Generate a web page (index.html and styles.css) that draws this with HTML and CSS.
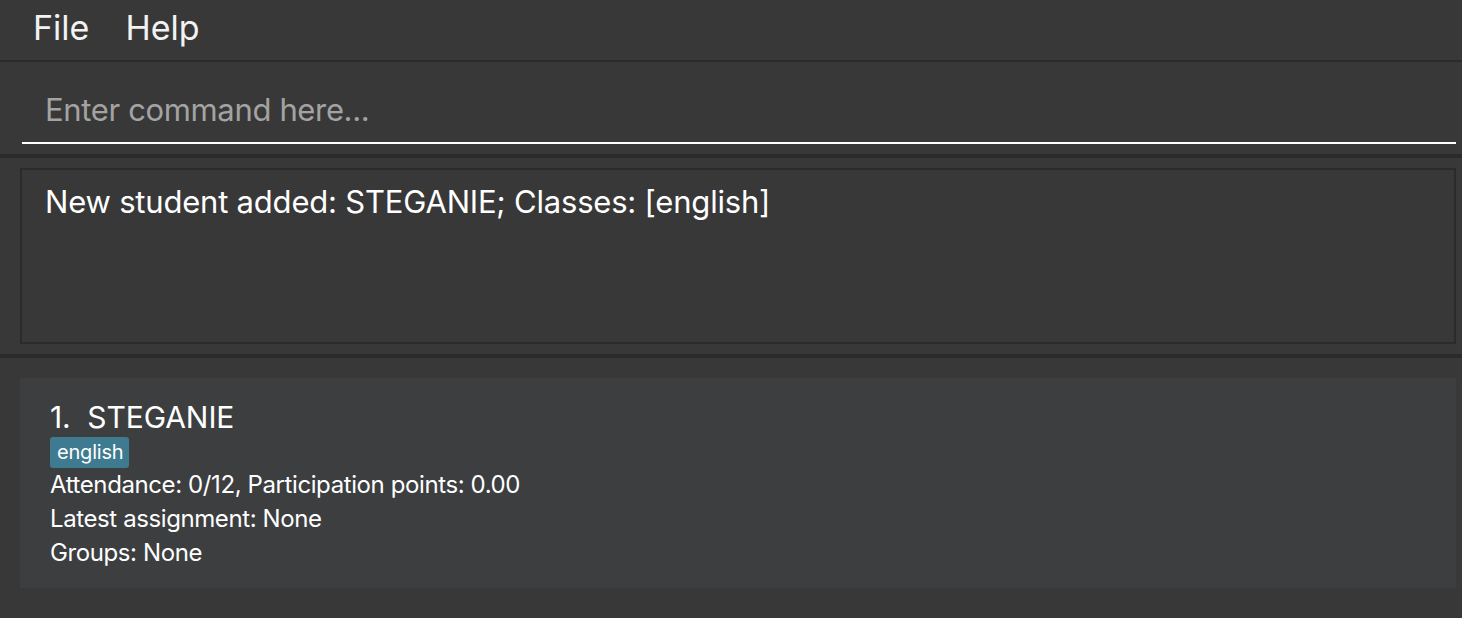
FILE: index.html
```html
<!DOCTYPE html>
<html>
<head>
<meta charset="utf-8">
<link rel="stylesheet" href="styles.css">
</head>
<body>
<div class="app">
  <div class="menubar">
    <span class="menu-item">File</span>
    <span class="menu-item">Help</span>
  </div>
  <div class="command-pane">
    <div class="command-field">
      <span class="placeholder">Enter command here...</span>
    </div>
  </div>
  <div class="result-pane">
    <div class="result-box">New student added: STEGANIE; Classes: [english]</div>
  </div>
  <div class="list-pane">
    <div class="card">
      <div class="name">1.&nbsp; STEGANIE</div>
      <div class="tags"><span class="tag">english</span></div>
      <div class="line">Attendance: 0/12, Participation points: 0.00</div>
      <div class="line">Latest assignment: None</div>
      <div class="line">Groups: None</div>
    </div>
    <div class="scroll-gutter"></div>
  </div>
</div>
</body>
</html>
```

FILE: styles.css
```css
html, body {
  margin: 0;
  padding: 0;
  background: #383838;
  font-family: Inter, "Open Sans", sans-serif;
  color: #ffffff;
}

.app {
  width: 1462px;
  height: 618px;
  display: flex;
  flex-direction: column;
  overflow: hidden;
}

.menubar {
  flex: none;
  border-bottom: 2px solid #2b2b2b;
  display: flex;
  align-items: center;
  padding: 0 0 5px 33px;
  box-sizing: content-box;
  height: 55px;
  gap: 36px;
  font-size: 34px;
  color: #f2f2f2;
}

.command-pane {
  flex: none;
  height: 96px;
  border-bottom: 4px solid #2b2b2b;
  padding: 0 6px 0 22px;
  box-sizing: border-box;
}

.command-field {
  height: 82px;
  border-bottom: 2px solid #ffffff;
  display: flex;
  align-items: flex-end;
  padding-left: 23px;
  padding-bottom: 17px;
  box-sizing: border-box;
}

.placeholder {
  font-size: 31px;
  letter-spacing: -0.35px;
  color: #a3a3a3;
  line-height: 1;
}

.result-pane {
  flex: none;
  border-bottom: 4px solid #2b2b2b;
  padding: 10px 6px 10px 20px;
  box-sizing: content-box;
  height: 176px;
}

.result-box {
  height: 176px;
  box-sizing: border-box;
  border: 2px solid #2b2b2b;
  padding: 12px 0 0 23px;
  font-size: 31px;
  letter-spacing: -0.2px;
  line-height: 40px;
  color: #ffffff;
}

.list-pane {
  flex: 1;
  display: flex;
  padding: 20px 0 0 20px;
}

.card {
  flex: 1;
  height: 210px;
  box-sizing: border-box;
  background: #3c3e3f;
  padding: 20px 0 0 30px;
}

.scroll-gutter {
  width: 6px;
  height: 210px;
  background: #393939;
}

.name {
  font-size: 30px;
  line-height: 38px;
  letter-spacing: -0.1px;
  color: #ffffff;
}

.tags {
  display: flex;
  margin-top: 1px;
}

.tag {
  background: #3e7b91;
  border-radius: 3px;
  font-size: 20px;
  letter-spacing: -0.2px;
  line-height: 31px;
  padding: 0 6px 0 7px;
  color: #ffffff;
}

.line {
  font-size: 24px;
  letter-spacing: -0.4px;
  line-height: 34px;
  color: #ffffff;
}
```
